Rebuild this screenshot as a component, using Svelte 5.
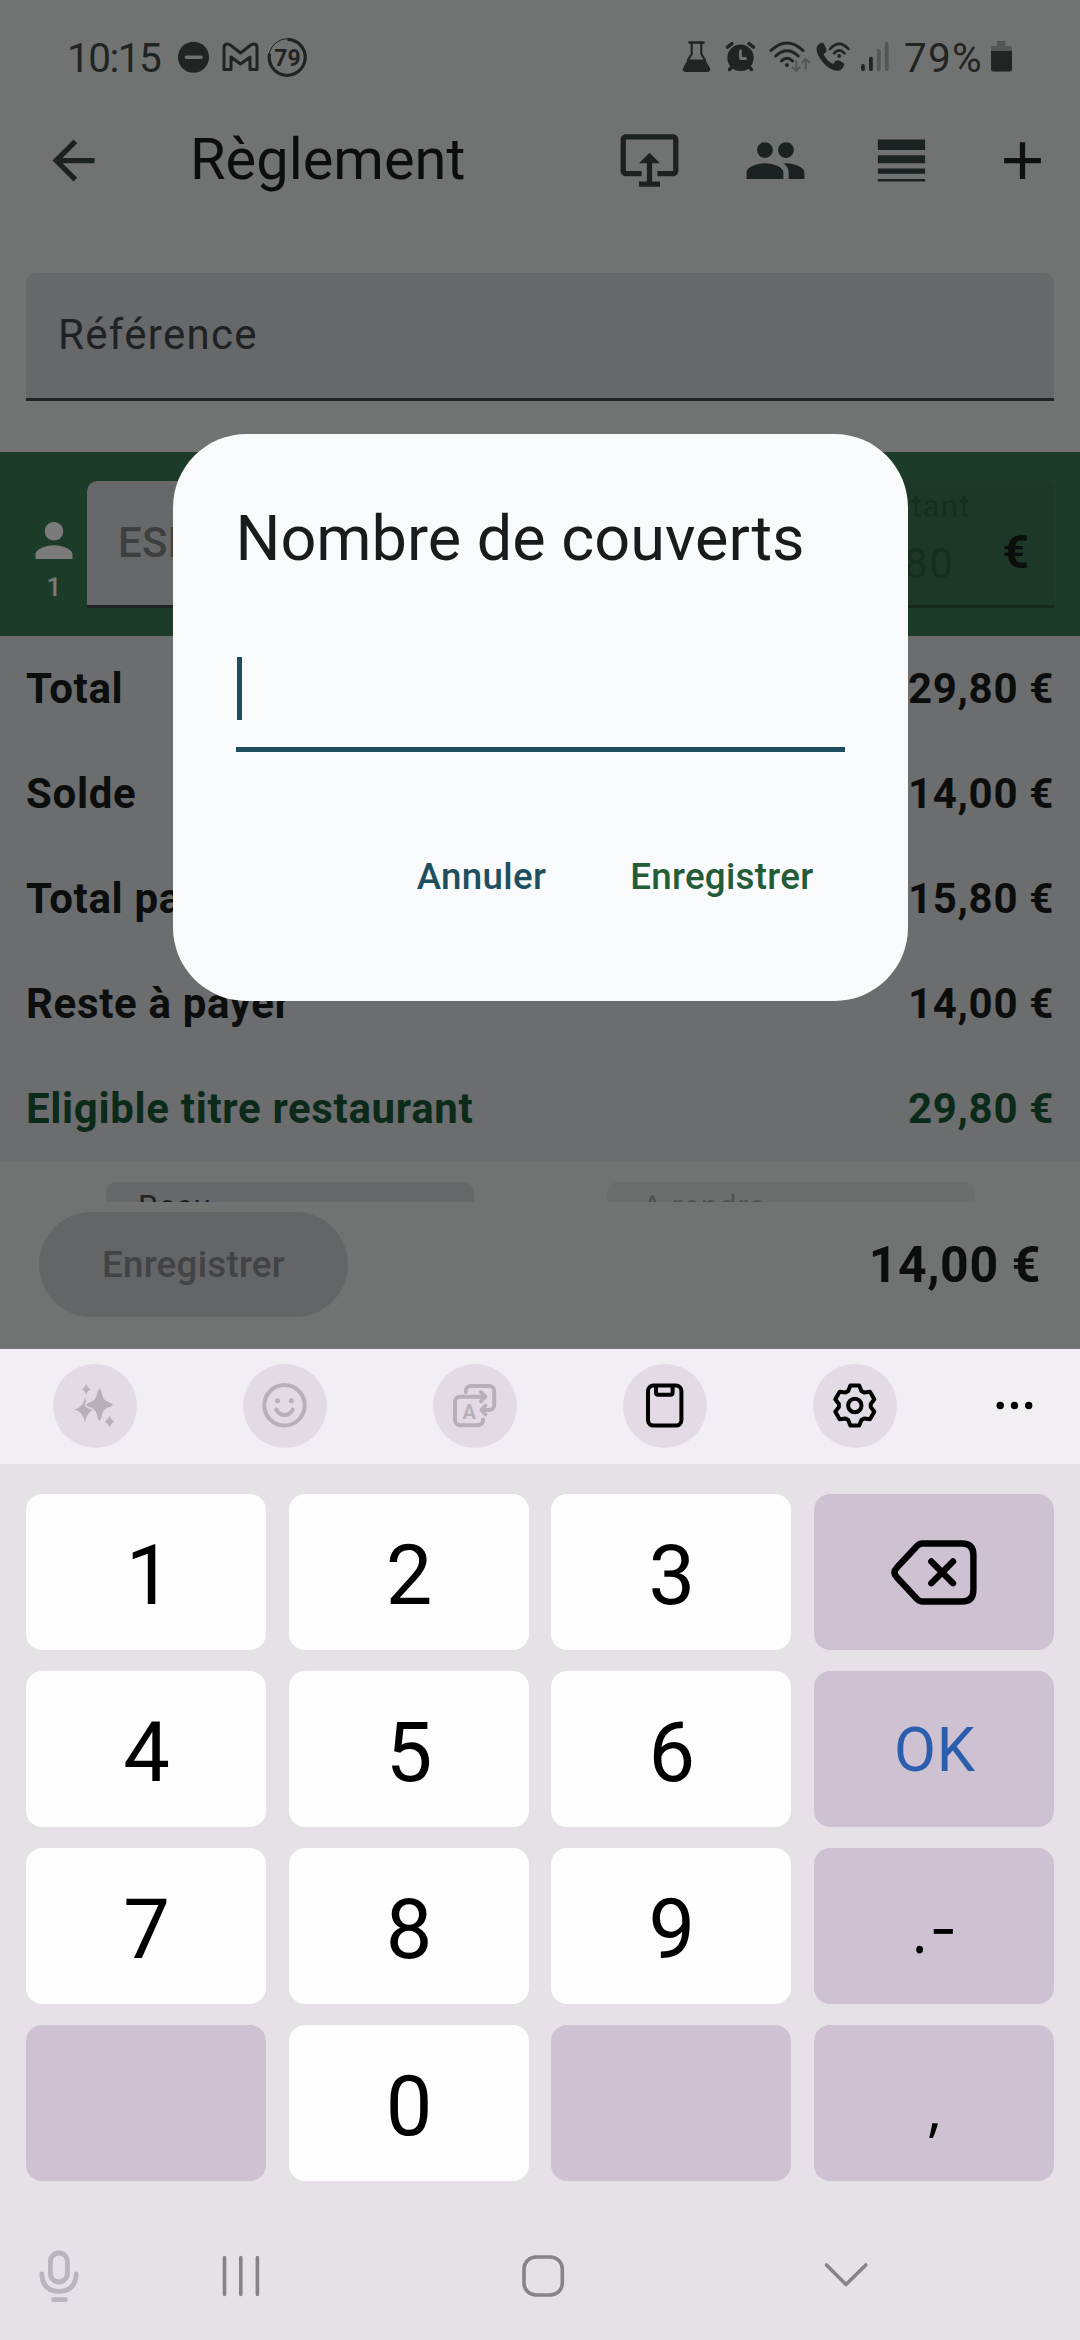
<script>
  const totals = [
    { label: 'Total', amount: '29,80 €' },
    { label: 'Solde', amount: '14,00 €' },
    { label: 'Total payé', amount: '15,80 €' },
    { label: 'Reste à payer', amount: '14,00 €' },
    { label: 'Eligible titre restaurant', amount: '29,80 €', accent: true }
  ];

  const keys = [
    { t: '1' }, { t: '2' }, { t: '3' }, { icon: 'backspace' },
    { t: '4' }, { t: '5' }, { t: '6' }, { t: 'OK', kind: 'ok' },
    { t: '7' }, { t: '8' }, { t: '9' }, { t: '.', dash: '-', kind: 'punct' },
    { t: '', kind: 'blank' }, { t: '0' }, { t: '', kind: 'blank' }, { t: ',', kind: 'punct' }
  ];

  // Outline of the six-toothed settings gear, centred on the origin.
  const tooth = [[-6.6, -14.6], [-4.4, -20], [4.4, -20], [6.6, -14.6]];
  const gear =
    'M' +
    [0, 60, 120, 180, 240, 300]
      .flatMap((deg) => {
        const a = (deg * Math.PI) / 180;
        return tooth.map(([x, y]) =>
          [x * Math.cos(a) - y * Math.sin(a), x * Math.sin(a) + y * Math.cos(a)].map((n) => n.toFixed(2)).join(' ')
        );
      })
      .join('L') +
    'Z';
</script>

<div class="screen">
  <header class="status">
    <span class="clock">10:15</span>
    <svg class="left-icons" viewBox="176 36 134 44" width="134" height="44">
      <circle cx="193.5" cy="57.3" r="15.5" fill="#222323" />
      <path d="M186.500 57.300H201" stroke="#717372" stroke-width="3.400" stroke-linecap="round" />
      <path d="M224 47.500q0-3.500 3.500-3.500q1.500 0 3 1.200L240.500 53l10-7.800q1.500-1.200 3-1.200q3.500 0 3.500 3.500V69.500H250V57L240.500 64L231 57V69.500H224Z" fill="none" stroke="#222323" stroke-width="3" stroke-linejoin="round" />
      <circle cx="287.400" cy="57.300" r="18.500" fill="none" stroke="#222323" stroke-width="1" />
      <path d="M287.400 39.300A18 18 0 1 1 269.600 53.500" fill="none" stroke="#222323" stroke-width="3.200" />
      <text x="287.400" y="66" text-anchor="middle" class="ring-text">79</text>
    </svg>
    <svg class="right-icons" viewBox="680 36 210 44" width="210" height="44" fill="none" stroke="#222323" stroke-linecap="round" stroke-linejoin="round">
      <path d="M688.500 42.500H702.500" stroke-width="2.600" />
      <path d="M690.700 43V54L687 60M700.300 43V54L704 60" stroke-width="2.200" />
      <path d="M687 59.500H704L709 68Q710 72 706 72H685Q681 72 682 68Z" fill="#222323" stroke="none" />
      <circle cx="739.500" cy="57.800" r="13.200" fill="#222323" stroke="none" />
      <path d="M739.500 51V58.500H744.500" stroke="#717372" stroke-width="2.800" />
      <path d="M726.500 47.200L731 43.600M752.500 47.200L748 43.600M728.500 69.500L732 66M750.500 69.500L747 66" stroke-width="3.400" />
      <g stroke-width="3">
        <path d="M770 50.500Q786 35.500 802 50.500" />
        <path d="M774.700 56Q786 45.500 797.200 56" />
        <path d="M780.500 60.800Q786 55.800 791.500 60.800" />
      </g>
      <circle cx="785.900" cy="65" r="2" fill="#222323" stroke="none" />
      <path d="M795.200 61.500V70.500M791.700 67.500L795.200 71L798.700 67.500M804.800 68.500V59.500M801.300 62.500L804.800 59L808.300 62.500" stroke="#555756" stroke-width="2.200" />
      <path d="M819.500 43Q822 42 823 44L825.500 49.500Q826 51.500 824 53L822.500 54Q825.500 61 832 64L834.500 61Q836 59.700 838 60.500L842.500 63Q843.800 64 843 65.500Q841 70 837 71Q829 70.500 822 62.500Q815 54 815.500 48Q816.500 44.500 819.500 43Z" fill="#222323" stroke="none" />
      <path d="M829 49Q838.200 38.800 847.400 49M833 53.300Q838.200 47.500 843.500 53.300" stroke-width="2.600" />
      <circle cx="838.200" cy="56" r="1.900" fill="#222323" stroke="none" />
      <g stroke-width="3.800">
        <path d="M862 66V69.200M869.900 58.600V69.200" />
        <path d="M877.800 51V69.200M885.700 43.800V69.200" stroke="#555756" />
      </g>
    </svg>
    <span class="percent">79%</span>
    <svg class="battery" viewBox="990 40 24 34" width="24" height="34">
      <path d="M997 41H1005.500V46H1010Q1012 46 1012 48V51.500H991V48Q991 46 993 46H997Z" fill="#555756" />
      <path d="M991 51H1012V69Q1012 71.500 1009.500 71.500H993.500Q991 71.500 991 69Z" fill="#222323" />
    </svg>
  </header>

  <nav class="appbar">
    <svg class="ico" viewBox="0 0 24 24"><path d="M20 11H7.830l5.590-5.590L12 4l-8 8 8 8 1.410-1.410L7.830 13H20v-2z" /></svg>
    <h1>Règlement</h1>
    <div class="actions">
      <svg class="ico" viewBox="0 1 24 24"><path d="M23 5v12c0 1.100-.9 2-2 2h-6v-2h6V5H3v12h6v2H3c-1.100 0-2-.9-2-2V5c0-1.100.9-2 2-2h18c1.100 0 2 .9 2 2zM12 10l4 4h-3v7h3v2H8v-2h3v-7H8z" /></svg>
      <svg class="ico" viewBox="0 0 24 24"><path d="M16 11c1.660 0 2.990-1.340 2.990-3S17.660 5 16 5s-3 1.340-3 3 1.340 3 3 3zm-8 0c1.660 0 2.990-1.340 2.990-3S9.660 5 8 5 5 6.340 5 8s1.340 3 3 3zm0 2c-2.330 0-7 1.170-7 3.500V19h14v-2.500c0-2.330-4.670-3.500-7-3.500zm8 0c-.29 0-.62.02-.97.05 1.160.84 1.970 1.970 1.970 3.450V19h6v-2.500c0-2.330-4.670-3.500-7-3.500z" /></svg>
      <svg class="ico" viewBox="0 0 24 24"><path d="M3 17h18v-2H3v2zm0 3h18v-1H3v1zm0-7h18v-3H3v3zm0-9v4h18V4H3z" /></svg>
      <svg class="ico plus" viewBox="0 0 24 24"><path d="M19 13h-6v6h-2v-6H5v-2h6V5h2v6h6v2z" /></svg>
    </div>
  </nav>

  <div class="field reference">Référence</div>

  <section class="payment">
    <div class="guest">
      <svg viewBox="4 4 16 16" width="38" height="37"><path d="M12 12c2.210 0 4-1.790 4-4s-1.790-4-4-4-4 1.790-4 4 1.790 4 4 4zm0 2c-2.670 0-8 1.340-8 4v2h16v-2c0-2.660-5.330-4-8-4z" /></svg>
      <span>1</span>
    </div>
    <div class="field method">ESPECES</div>
    <div class="field amount">
      <div class="stack"><small>Montant</small><span>15,80</span></div>
      <b>€</b>
    </div>
  </section>

  <section class="totals">
    {#each totals as row}
      <div class="row" class:accent={row.accent}><span>{row.label}</span><span>{row.amount}</span></div>
    {/each}
  </section>

  <section class="change">
    <div class="mini">Reçu</div>
    <div class="mini off">A rendre</div>
  </section>

  <footer class="bottom">
    <button class="save">Enregistrer</button>
    <strong>14,00 €</strong>
  </footer>

  <section class="keyboard">
    <div class="tools">
      <span class="tool dim">
        <svg viewBox="53 1364 84 84" width="84" height="84">
          <path d="M85 1397Q86.500 1408 94 1409.700Q87 1411.500 85 1422.500Q83 1411.500 74.500 1409.700Q83.500 1407.500 85 1397Z" fill="#b6b0b8" />
          <path d="M99.500 1388Q102 1388 103 1395Q104.500 1400 109 1401.500Q113.500 1403 113.500 1404.700Q113.500 1406.500 109 1408Q104.500 1409.500 103 1414Q101.500 1421.500 99.500 1421.500Q97.500 1421.500 96 1414Q94.500 1409.500 90 1408Q85.500 1406.500 85.500 1404.700Q85.500 1403 90 1401.500Q94.500 1400 96 1395Q97.500 1388 99.500 1388Z" fill="#b6b0b8" stroke="#e2dae5" stroke-width="1.500" />
          <path d="M86.200 1383.500Q87.500 1388 91 1389.200Q87.500 1390.500 86.200 1395Q85 1390.500 81.500 1389.200Q85 1388 86.200 1383.500ZM109.500 1415.500Q111 1420 114.500 1421.500Q111 1423 109.500 1427.500Q108 1423 104.500 1421.500Q108 1420 109.500 1415.500Z" fill="#b6b0b8" />
        </svg>
      </span>
      <span class="tool dim">
        <svg viewBox="243 1364 84 84" width="84" height="84">
          <circle cx="284.500" cy="1405.300" r="20.200" /><path d="M276.200 1409.500Q279 1415 284.500 1415Q290 1415 292.800 1409.500" />
          <circle cx="277.400" cy="1400.800" r="2.500" class="dot" /><circle cx="291.400" cy="1400.800" r="2.500" class="dot" />
        </svg>
      </span>
      <span class="tool dim">
        <svg viewBox="433 1364 84 84" width="84" height="84">
          <path d="M485 1396.800H460A5 5 0 0 0 455 1401.800V1420.200A5 5 0 0 0 460 1425.200H478A5 5 0 0 0 483 1420.200V1419.500" />
          <path d="M465.800 1392V1391A5 5 0 0 1 470.800 1386H489.200A5 5 0 0 1 494.200 1391V1405A5 5 0 0 1 489.200 1410H482" />
          <path d="M480.800 1392L485.600 1396.800L480.800 1401.600M485.600 1405.500L481.300 1410L485.600 1414.500" stroke-width="3.600" />
          <text x="469.300" y="1418.800" text-anchor="middle" class="tr">A</text>
        </svg>
      </span>
      <span class="tool">
        <svg viewBox="623 1364 84 84" width="84" height="84">
          <rect x="648" y="1385.600" width="33.400" height="40" rx="5.500" /><path d="M656 1386V1392.500Q656 1394.800 658.300 1394.800H670.300Q672.600 1394.800 672.600 1392.500V1386" />
        </svg>
      </span>
      <span class="tool">
        <svg viewBox="812.500 1364 84 84" width="84" height="84">
          <g transform="translate(854.300 1405.500)"><path d={gear} /><circle r="6.700" /></g>
        </svg>
      </span>
      <svg class="more" viewBox="996 1400 37 12" width="37" height="12"><circle cx="1000.200" cy="1405.500" r="3.700" /><circle cx="1014.500" cy="1405.500" r="3.700" /><circle cx="1028.700" cy="1405.500" r="3.700" /></svg>
    </div>

    <div class="keys">
      {#each keys as key}
        <div class="key {key.kind ?? (key.icon ? 'blank' : '')}">
          {#if key.icon}
            <svg viewBox="888 1537 92 71" width="92" height="71">
              <path d="M922.500 1543.500H962Q973.400 1543.500 973.400 1555V1590Q973.400 1601.500 962 1601.500H922.500Q919.500 1601.500 917 1599L897 1577.500Q892 1572.500 897 1567.500L917 1546Q919.500 1543.500 922.500 1543.500Z" />
              <path d="M931.300 1561.500L953 1583.200M953 1561.500L931.300 1583.200" />
            </svg>
          {:else}
            <span>{key.t}{#if key.dash}<em>{key.dash}</em>{/if}</span>
          {/if}
        </div>
      {/each}
    </div>

    <div class="sysnav">
      <svg class="mic" viewBox="36 2248 46 56" width="46" height="56">
        <rect x="50.400" y="2253" width="17" height="29" rx="8.500" /><path d="M41.800 2274Q42.500 2291.300 59 2291.300Q75.500 2291.300 76.200 2274M53.500 2299.700H65.500" />
      </svg>
      <svg viewBox="220 2252 42 48" width="42" height="48"><path d="M224.500 2257.500V2294.500M240.800 2257.500V2294.500M257.400 2257.500V2294.500" /></svg>
      <svg viewBox="519 2252 48 48" width="48" height="48"><rect x="524" y="2257" width="38.300" height="38" rx="12" /></svg>
      <svg viewBox="822 2252 48 48" width="48" height="48"><path d="M826.500 2265L846 2284.500L865.800 2265" /></svg>
    </div>
  </section>

  <div class="dialog">
    <h2>Nombre de couverts</h2>
    <div class="input"><i></i></div>
    <div class="buttons"><span>Annuler</span><span class="ok">Enregistrer</span></div>
  </div>
</div>

<style>
  :global(body) { margin: 0; }
  .screen {
    position: relative; width: 1080px; height: 2340px; overflow: hidden;
    display: flex; flex-direction: column; background: #717372;
    font-family: Roboto, "Liberation Sans", sans-serif; color: #0c0e0d;
  }
  svg { display: block; flex: none; }
  h1, h2 { margin: 0; font-weight: 400; }

  .status { height: 114px; flex: none; display: flex; align-items: center; padding: 0 66px 0 67px; color: #222323; font-size: 40.5px; font-weight: 400; line-height: 44px; }
  .clock { width: 109px; padding-top: 1px; letter-spacing: -1.5px; }
  .left-icons { margin-top: 2px; }
  .right-icons { margin: 2px 0 0 371px; }
  .ring-text { font: 700 23px Roboto, sans-serif; fill: #222323; }
  .percent { width: 86px; margin-left: 13px; padding-top: 1px; letter-spacing: 1.2px; }

  .appbar { height: 93px; flex: none; display: flex; align-items: center; padding: 0 26px 0 42px; }
  .ico { width: 63px; height: 63px; fill: #1c2122; }
  .plus { fill: #0f1010; margin-left: -5px; }
  h1 { margin: -3px 0 0 85px; font-size: 57.75px; line-height: 66px; }
  .actions { display: flex; gap: 63px; margin-left: auto; }

  .field { box-sizing: border-box; border-radius: 10.5px 10.5px 0 0; background: #67686a; border-bottom: 3px solid #202223; display: flex; align-items: center; }
  .reference { margin: 66px 26px 51px; height: 128px; flex: none; padding: 0 32px 3px; font-size: 42px; letter-spacing: 1.3px; color: #1f2223; }

  .payment { height: 184px; flex: none; display: flex; align-items: flex-start; background: #1c3b29; padding: 29px 26px 0 35px; box-sizing: border-box; }
  .guest { width: 38px; margin: 41px 14px 0 0; display: flex; flex-direction: column; align-items: center; fill: #7b7b7b; color: #7b7b7b; font-size: 26.25px; font-weight: 500; line-height: 30px; gap: 13px; }
  .method { width: 470px; height: 127px; padding: 0 0 2px 31px; font-size: 42px; font-weight: 500; letter-spacing: .3px; color: #3e3f3f; }
  .amount { width: 240px; height: 127px; margin-left: auto; background: #1d3828; border-color: #16291d; padding: 0 25px 0 31px; justify-content: space-between; align-items: flex-start; color: #162d20; }
  .stack { display: flex; flex-direction: column; font-size: 42px; letter-spacing: 1.3px; line-height: 50px; padding-top: 7px; }
  .stack small { font-size: 31.5px; line-height: 38px; letter-spacing: 1.1px; }
  .stack span { padding-top: 13px; }
  .amount b { color: #0c0e0d; font-size: 46px; line-height: 54px; padding-top: 44px; }

  .totals { background: #6c6d6f; height: 525px; flex: none; }
  .row { height: 105px; display: flex; justify-content: space-between; align-items: center; padding: 0 26px; font-size: 42px; font-weight: 700; letter-spacing: .66px; }
  .accent { color: #0c2a1a; }

  .change { height: 41px; flex: none; overflow: hidden; display: flex; gap: 133px; padding: 21px 106px 0; box-sizing: border-box; }
  .mini { width: 368px; height: 128px; flex: none; border-radius: 10.5px 10.5px 0 0; background: #67686a; box-sizing: border-box; padding: 6px 32px; font-size: 31.5px; line-height: 38px; letter-spacing: 1px; color: #1f2223; }
  .off { background: #6c6e6d; color: #505252; padding-left: 35px; letter-spacing: .8px; }

  .bottom { height: 147px; flex: none; background: #717372; display: flex; justify-content: space-between; align-items: flex-start; padding: 10px 39px; box-sizing: border-box; }
  .save { width: 309px; height: 105px; border: 0; border-radius: 53px; padding: 0; background: #646567; color: #424345; font: 500 36.75px Roboto, sans-serif; letter-spacing: .25px; }
  .bottom strong { font-size: 50px; line-height: 58px; padding-top: 24px; letter-spacing: .6px; }

  .keyboard { flex: 1; background: #e5e1e7; display: flex; flex-direction: column; }
  .tools { height: 115px; flex: none; background: #f1eef4; display: flex; align-items: center; gap: 106px; padding: 0 0 2px 53px; box-sizing: border-box; }
  .tool { width: 84px; height: 84px; flex: none; border-radius: 50%; background: #e2dae5; fill: none; stroke: #000; stroke-width: 4; stroke-linecap: round; stroke-linejoin: round; }
  .tool svg { overflow: visible; }
  .dim { stroke: #b6b0b8; }
  .dim:first-child { stroke: none; }
  .dot { fill: #b6b0b8; stroke: none; }
  .tr { font: 700 20px Roboto, sans-serif; fill: #b6b0b8; stroke: none; }
  .more { margin-left: -7px; }
  .keys { padding: 30px 26px 0; display: grid; grid-template-columns: repeat(4, 1fr); grid-auto-rows: 156px; gap: 21px 22.67px; }
  .key { border-radius: 16px; background: #fdfdfd; display: flex; align-items: center; justify-content: center; font-size: 83px; line-height: 96px; color: #000; }
  .key span { padding: 8px 0 0 1px; }
  .key:first-child span { padding-left: 6px; }
  .blank, .ok.key, .punct { background: #cdc1d2; }
  .key svg { fill: none; stroke: #000; stroke-width: 6.4; stroke-linecap: round; stroke-linejoin: round; }
  .ok.key { font-size: 61px; letter-spacing: .8px; color: #2b5eac; }
  .key.ok span { padding: 2px 0 0 2px; }
  .punct { font-family: "Open Sans", sans-serif; font-size: 60px; }
  .key em { display: inline-block; font: 400 60px/60px Inter, sans-serif; margin: 0 0 4px 2px; vertical-align: 3px; }
  .sysnav { flex: 1; display: flex; align-items: center; padding: 31px 36px 0; fill: none; stroke: #868488; stroke-width: 3.6; stroke-linecap: round; stroke-linejoin: round; }
  .mic { stroke: #bab5bd; stroke-width: 4.8; }
  .sysnav svg:nth-child(2) { margin-left: 138px; }
  .sysnav svg:nth-child(3) { margin-left: 257px; }
  .sysnav svg:nth-child(4) { margin-left: 255px; }

  .dialog { position: absolute; left: 172.5px; top: 434.3px; width: 735px; height: 567px; box-sizing: border-box; border-radius: 73.5px; background: #f9fafc; padding: 63px; display: flex; flex-direction: column; }
  h2 { font-size: 63px; line-height: 84px; color: #191c1d; white-space: nowrap; }
  .input { height: 90px; padding-top: 76px; border-bottom: 5px solid #1f4f5e; }
  .input i { display: block; width: 5px; height: 63px; margin-left: 1px; background: #1f4f5e; }
  .buttons { display: flex; justify-content: flex-end; gap: 84px; padding: 104px 31px 0 0; font-size: 36.75px; line-height: 42px; font-weight: 500; letter-spacing: .28px; color: #1f4f5e; }
  .buttons .ok { color: #245c38; }
</style>
